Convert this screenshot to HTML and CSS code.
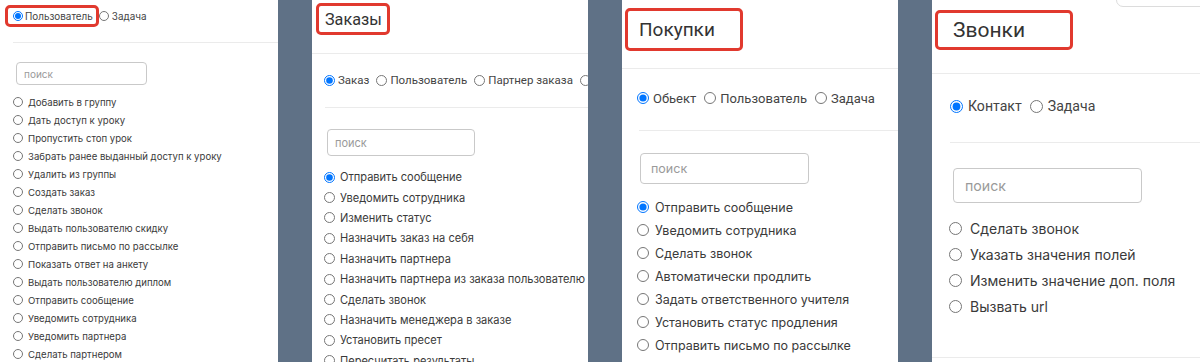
FILE: index.html
```html
<!DOCTYPE html>
<html lang="ru">
<head>
<meta charset="utf-8">
<title>Действия</title>
<link rel="stylesheet" href="styles.css">
</head>
<body>
<div class="stage">

  <section class="panel p1">
    <div class="head">
      <label class="hl opt"><input type="radio" name="t1" checked><span>Пользователь</span></label>
      <label class="opt"><input type="radio" name="t1"><span>Задача</span></label>
    </div>
    <div class="sep"></div>
    <input class="search" type="text" placeholder="поиск">
    <ul class="list">
      <li><label><input type="radio" name="a1"><span>Добавить в группу</span></label></li>
      <li><label><input type="radio" name="a1"><span>Дать доступ к уроку</span></label></li>
      <li><label><input type="radio" name="a1"><span>Пропустить стоп урок</span></label></li>
      <li><label><input type="radio" name="a1"><span>Забрать ранее выданный доступ к уроку</span></label></li>
      <li><label><input type="radio" name="a1"><span>Удалить из группы</span></label></li>
      <li><label><input type="radio" name="a1"><span>Создать заказ</span></label></li>
      <li><label><input type="radio" name="a1"><span>Сделать звонок</span></label></li>
      <li><label><input type="radio" name="a1"><span>Выдать пользователю скидку</span></label></li>
      <li><label><input type="radio" name="a1"><span>Отправить письмо по рассылке</span></label></li>
      <li><label><input type="radio" name="a1"><span>Показать ответ на анкету</span></label></li>
      <li><label><input type="radio" name="a1"><span>Выдать пользователю диплом</span></label></li>
      <li><label><input type="radio" name="a1"><span>Отправить сообщение</span></label></li>
      <li><label><input type="radio" name="a1"><span>Уведомить сотрудника</span></label></li>
      <li><label><input type="radio" name="a1"><span>Уведомить партнера</span></label></li>
      <li><label><input type="radio" name="a1"><span>Сделать партнером</span></label></li>
    </ul>
  </section>

  <section class="panel p2">
    <div class="head">
      <h2 class="hl title">Заказы</h2>
    </div>
    <div class="sep"></div>
    <div class="types">
      <label class="opt"><input type="radio" name="t2" checked><span>Заказ</span></label>
      <label class="opt"><input type="radio" name="t2"><span>Пользователь</span></label>
      <label class="opt"><input type="radio" name="t2"><span>Партнер заказа</span></label>
      <label class="opt"><input type="radio" name="t2" aria-label="Задача"></label>
    </div>
    <div class="sep sep-in"></div>
    <input class="search" type="text" placeholder="поиск">
    <ul class="list">
      <li><label><input type="radio" name="a2" checked><span>Отправить сообщение</span></label></li>
      <li><label><input type="radio" name="a2"><span>Уведомить сотрудника</span></label></li>
      <li><label><input type="radio" name="a2"><span>Изменить статус</span></label></li>
      <li><label><input type="radio" name="a2"><span>Назначить заказ на себя</span></label></li>
      <li><label><input type="radio" name="a2"><span>Назначить партнера</span></label></li>
      <li><label><input type="radio" name="a2"><span>Назначить партнера из заказа пользователю</span></label></li>
      <li><label><input type="radio" name="a2"><span>Сделать звонок</span></label></li>
      <li><label><input type="radio" name="a2"><span>Назначить менеджера в заказе</span></label></li>
      <li><label><input type="radio" name="a2"><span>Установить пресет</span></label></li>
      <li><label><input type="radio" name="a2"><span>Пересчитать результаты</span></label></li>
    </ul>
  </section>

  <section class="panel p3">
    <div class="head">
      <h2 class="hl title">Покупки</h2>
    </div>
    <div class="sep"></div>
    <div class="types">
      <label class="opt"><input type="radio" name="t3" checked><span>Обьект</span></label>
      <label class="opt"><input type="radio" name="t3"><span>Пользователь</span></label>
      <label class="opt"><input type="radio" name="t3"><span>Задача</span></label>
    </div>
    <div class="sep sep-in"></div>
    <input class="search" type="text" placeholder="поиск">
    <ul class="list">
      <li><label><input type="radio" name="a3" checked><span>Отправить сообщение</span></label></li>
      <li><label><input type="radio" name="a3"><span>Уведомить сотрудника</span></label></li>
      <li><label><input type="radio" name="a3"><span>Сделать звонок</span></label></li>
      <li><label><input type="radio" name="a3"><span>Автоматически продлить</span></label></li>
      <li><label><input type="radio" name="a3"><span>Задать ответственного учителя</span></label></li>
      <li><label><input type="radio" name="a3"><span>Установить статус продления</span></label></li>
      <li><label><input type="radio" name="a3"><span>Отправить письмо по рассылке</span></label></li>
    </ul>
  </section>

  <section class="panel p4">
    <div class="topbar"><div class="stub"></div></div>
    <div class="head">
      <h2 class="hl title">Звонки</h2>
    </div>
    <div class="sep"></div>
    <div class="types">
      <label class="opt"><input type="radio" name="t4" checked><span>Контакт</span></label>
      <label class="opt"><input type="radio" name="t4"><span>Задача</span></label>
    </div>
    <div class="sep sep-in"></div>
    <input class="search" type="text" placeholder="поиск">
    <ul class="list">
      <li><label><input type="radio" name="a4"><span>Сделать звонок</span></label></li>
      <li><label><input type="radio" name="a4"><span>Указать значения полей</span></label></li>
      <li><label><input type="radio" name="a4"><span>Изменить значение доп. поля</span></label></li>
      <li><label><input type="radio" name="a4"><span>Вызвать url</span></label></li>
    </ul>
    <div class="sep"></div>
  </section>

</div>
</body>
</html>
```

FILE: styles.css
```css
* { box-sizing: border-box; }

html, body {
  margin: 0;
  height: 362px;
  overflow: hidden;
}

body {
  background: #5f7186;
  font-family: Inter, "Noto Sans", sans-serif;
  color: #3a3a3a;
}

.stage {
  display: flex;
  gap: 34px;
  height: 362px;
}

.panel {
  flex: none;
  height: 362px;
  background: #fff;
  overflow: hidden;
  display: flex;
  flex-direction: column;
}

.p1 { width: 278px; }
.p2, .p3 { width: 276px; }
.p4 { width: 268px; }

/* shared pieces */
input[type="radio"] {
  margin: 0;
  flex: none;
}

.head {
  display: flex;
  align-items: center;
}

.hl {
  border: 3px solid #e1392e;
  border-radius: 5px;
}

.title {
  margin: 0;
  font-family: Roboto, "Liberation Sans", sans-serif;
  font-weight: 400;
  color: #333;
  display: flex;
  align-items: center;
}

.opt {
  display: flex;
  align-items: center;
  white-space: nowrap;
  flex: none;
}

.types {
  display: flex;
  align-items: center;
  font-family: Roboto, "Liberation Sans", sans-serif;
  color: #444;
}

.sep {
  height: 1px;
  background: #ebebeb;
  flex: none;
}

.search {
  flex: none;
  display: block;
  border: 1px solid #c9c9c9;
  border-radius: 4px;
  background: #fff;
  font-family: Inter, "Noto Sans", sans-serif;
  color: #333;
  outline: none;
}
.search::placeholder { color: #9a9a9a; }

.list {
  list-style: none;
  margin: 0;
  padding: 0;
}
.list li {
  display: flex;
  align-items: center;
}
.list label {
  display: flex;
  align-items: center;
  white-space: nowrap;
}

/* panel 1 */
.p1 .head { padding: 5px 0 0 5px; }
.p1 .hl { height: 22px; padding: 0 3px 0 5px; }
.p1 .opt { font-size: 9.9px; color: #444; }
.p1 .opt input { width: 10px; height: 10px; margin-right: 2px; }
.p1 .opt + .opt input { margin-right: 3px; }
.p1 .sep { margin: 15px 0 0 13px; }
.p1 .search { margin: 19px 0 0 16px; width: 131px; height: 23px; padding: 0 0 0 7px; font-size: 10px; }
.p1 .list { margin-top: 8px; padding-left: 13px; font-size: 9.6px; }
.p1 .list li { height: 18px; }
.p1 .list input { width: 10px; height: 10px; margin-right: 5px; }

/* panel 2 */
.p2 .head { padding: 3px 0 0 4px; }
.p2 .hl { height: 32px; width: 74px; padding: 0 0 0 6px; font-size: 16.2px; }
.p2 .sep { margin-top: 18px; }
.p2 .types { margin-top: 19px; height: 20px; padding-left: 12px; gap: 7px; font-size: 11.5px; }
.p2 .types input { width: 11px; height: 11px; margin-right: 3px; }
.p2 .sep-in { margin: 20px 0 0 13px; }
.p2 .search { margin: 21px 0 0 15px; width: 148px; height: 27px; padding: 0 0 0 7px; font-size: 11px; }
.p2 .list { margin-top: 11px; padding-left: 12px; font-size: 11.05px; }
.p2 .list li { height: 20.4px; }
.p2 .list input { width: 11px; height: 11px; margin-right: 5px; }

/* panel 3 */
.p3 .head { padding: 8px 0 0 3px; }
.p3 .hl { height: 43px; width: 118px; padding: 0 0 0 11px; font-size: 19px; }
.p3 .sep { margin-top: 17px; }
.p3 .types { margin-top: 19px; height: 20px; padding-left: 15px; gap: 8px; font-size: 13px; }
.p3 .types input { width: 12px; height: 12px; margin-right: 4px; }
.p3 .sep-in { margin: 22px 0 0 17px; }
.p3 .search { margin: 22px 0 0 18px; width: 169px; height: 31px; padding: 0 0 0 10px; font-size: 12.5px; }
.p3 .list { margin-top: 11.5px; padding-left: 15px; font-size: 12.5px; }
.p3 .list li { height: 23px; }
.p3 .list input { width: 12px; height: 12px; margin-right: 6px; }

/* panel 4 */
.p4 .topbar { display: flex; justify-content: flex-end; }
.p4 .stub {
  width: 92px;
  height: 20px;
  margin: -13px -8px 0 0;
  border: 1px solid #dcdcdc;
  border-radius: 7px;
}
.p4 .head { padding: 3px 0 0 3px; }
.p4 .hl { height: 40px; width: 138px; padding: 0 0 0 15px; font-size: 21px; }
.p4 .sep { margin-top: 23px; }
.p4 .types { margin-top: 21px; height: 22px; padding-left: 18px; gap: 8px; font-size: 14.1px; }
.p4 .types input { width: 13px; height: 13px; margin-right: 5px; }
.p4 .sep-in { margin: 25px 0 0 18px; }
.p4 .search { margin: 25px 0 0 21px; width: 189px; height: 35px; padding: 0 0 0 11px; font-size: 14.2px; }
.p4 .list { margin-top: 13px; padding-left: 17px; font-size: 14px; }
.p4 .list li { height: 25.8px; }
.p4 .list input { width: 13px; height: 13px; margin-right: 8px; }
.p4 .list + .sep { margin-top: 38px; }
```
